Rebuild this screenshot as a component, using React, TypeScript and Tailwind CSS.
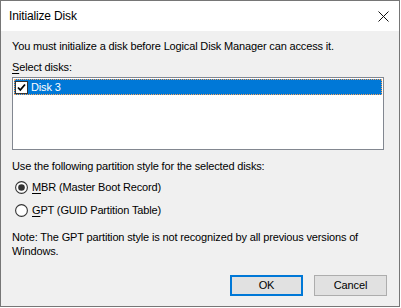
import React from "react";

const font = { fontFamily: '"Liberation Sans", Arial, sans-serif', letterSpacing: "-0.15px" };

function Radio({ checked }: { checked?: boolean }) {
  return (
    <svg width="13" height="13" viewBox="0 0 13 13" className="shrink-0">
      <circle cx="6.5" cy="6.5" r="5.9" fill="#ffffff" stroke="#333333" strokeWidth="1.1" />
      {checked && <circle cx="6.5" cy="6.5" r="3.3" fill="#333333" />}
    </svg>
  );
}

export default function App() {
  return (
    <div className="w-[401px] h-[308px] bg-white" style={font}>
      <div className="w-[400px] h-[307px] border border-[#767676] flex flex-col text-[11px] text-black">
        <div className="h-[30px] bg-white flex items-center justify-between pl-[8px] pr-[9px] shrink-0">
          <span className="text-[12px] leading-[15px] mt-[1px]">Initialize Disk</span>
          <svg width="11" height="11" viewBox="0 0 11 11" className="mr-[1px]">
            <path d="M0.5 0.5 L10.5 10.5 M10.5 0.5 L0.5 10.5" stroke="#111" strokeWidth="1" />
          </svg>
        </div>
        <div className="flex-1 bg-[#f0f0f0] pl-[11px] flex flex-col">
          <p className="mt-[8px] leading-[15px]">You must initialize a disk before Logical Disk Manager can access it.</p>
          <p className="mt-[6px] leading-[15px]">
            <span className="underline underline-offset-2">S</span>elect disks:
          </p>
          <div className="mt-[2px] w-[372px] h-[73px] border border-[#828790] bg-white p-[1px]">
            <div className="h-[16px] bg-[#0078d7] flex items-center outline-1 outline-dotted outline-[#f7a35c] -outline-offset-1">
              <div className="ml-[1px] w-[13px] h-[13px] bg-white border border-[#333] flex items-center justify-center">
                <svg width="11" height="11" viewBox="0 0 11 11">
                  <path d="M2 5.5 L4.3 8 L9 2.5" fill="none" stroke="#000" strokeWidth="1.8" />
                </svg>
              </div>
              <span className="ml-[3px] text-white leading-[15px]">Disk 3</span>
            </div>
          </div>
          <p className="mt-[9px] leading-[15px]">Use the following partition style for the selected disks:</p>
          <div className="mt-[5px] flex flex-col gap-[6px] pl-[3px]">
            <div className="h-[17px] flex items-center gap-[4px]">
              <Radio checked />
              <span className="leading-[15px]">
                <span className="underline underline-offset-2">M</span>BR (Master Boot Record)
              </span>
            </div>
            <div className="h-[17px] flex items-center gap-[4px]">
              <Radio />
              <span className="leading-[15px]">
                <span className="underline underline-offset-2">G</span>PT (GUID Partition Table)
              </span>
            </div>
          </div>
          <p className="mt-[11px] leading-[14px] pr-[12px]">
            Note: The GPT partition style is not recognized by all previous versions of Windows.
          </p>
          <div className="mt-[17px] flex justify-end gap-[11px] pr-[12px]">
            <button className="w-[73px] h-[21px] bg-[#e1e1e1] border-2 border-[#0078d7] leading-[15px] text-black">OK</button>
            <button className="w-[73px] h-[21px] bg-[#e1e1e1] border border-[#adadad] leading-[15px] text-black">Cancel</button>
          </div>
        </div>
      </div>
    </div>
  );
}
